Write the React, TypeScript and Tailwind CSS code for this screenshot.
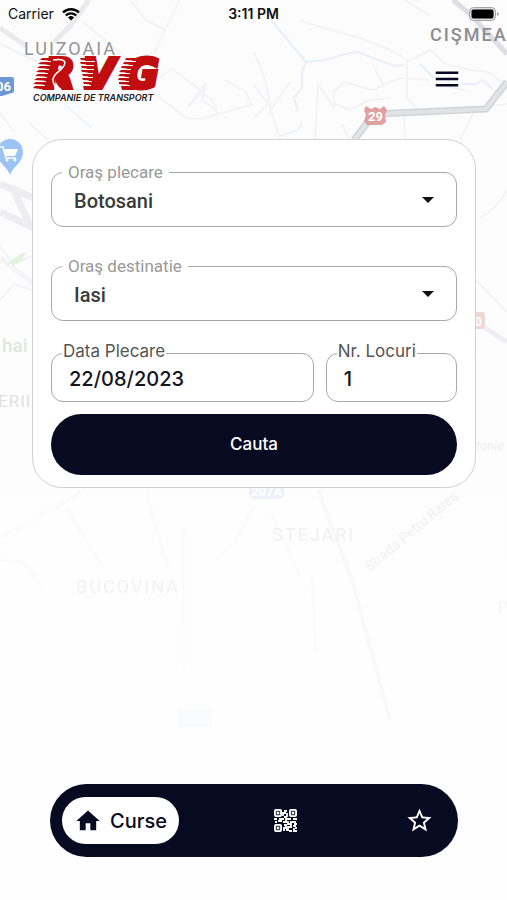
import React, { useState } from "react";
import { MdHome, MdMenu, MdStarBorder } from "react-icons/md";

const cities = ["Botosani", "Iasi", "Suceava", "Bucuresti"];

const QrIcon = () => (
  <svg viewBox="0 0 23 23" className="size-[23px]" fill="none" stroke="currentColor" aria-hidden="true">
    <g fill="#4a4d60" strokeWidth="1.800">
      <rect x="0.900" y="0.900" width="6.200" height="6.200" rx="1" />
      <rect x="15.900" y="0.900" width="6.200" height="6.200" rx="1" />
      <rect x="0.900" y="15.900" width="6.200" height="6.200" rx="1" />
    </g>
    <path d="M3 4h2M18 4h2M3 19h2" strokeWidth="2" />
    <path
      d="M9 7V4h2V2h2M13 4v4M10 8h3M0 10h3M4 12h4M5 10h5M9 13h3v-3h5M14 12v3h3v-2h3M19 10h4M21 12v3h2M17 16v2h-3v3h-2M10 16h2v3h-2v3M19 17h3M20 19v3h3M15 22h3M22 18v2M1 13h2"
      strokeWidth="1.800"
    />
  </svg>
);

const Logo = () => (
  <svg viewBox="0 0 128 48" className="h-12 w-32" role="img" aria-label="RVG Companie de transport">
    <g
      fill="#c00d0d"
      stroke="#c00d0d"
      strokeWidth="4"
      fontFamily="DejaVu Sans, sans-serif"
      fontWeight="700"
      fontStyle="italic"
      fontSize="40"
    >
      <text x="11" y="33">R</text>
      <text x="51" y="33">V</text>
      <text x="93" y="33">G</text>
    </g>
    {/* speed lines trailing each letter */}
    <g fill="#c00d0d">
      <path d="M9 3H24V6L7 5ZM8 7H22V10L5 9ZM7 11H22V14L4 13ZM6 15H20V18L3 17ZM5 19H20V22L2 21ZM4 23H18V26L1 25ZM3 27H16V30L0 29ZM2 31H15V35L0 33Z" />
      <path d="M47 3H62V6L48 5ZM47 7H64V10L48 9ZM48 11H64V14L49 13ZM48 15H65V18L49 17ZM49 19H66V22L50 21ZM49 23H66V26L50 25ZM50 27H66V30L51 29ZM50 31H66V35H51Z" />
      <path d="M93 3H108V6L92 5ZM91 7H104V10L90 9ZM89 11H102V14L88 13ZM88 15H100V18L86 17ZM87 19H100V22L85 21ZM86 23H100V26L85 25ZM86 27H100V30L86 29ZM88 31H102V35H89Z" />
    </g>
    <g stroke="#fff" strokeWidth="1">
      <path d="M5 6.500H18M4 10.500H17M3 14.500H16M2 18.500H15M2 22.500H14M1 26.500H13M0 30.500H12" />
      <path d="M47 6.500H62M47 10.500H61M48 14.500H61M48 18.500H60M49 22.500H60M49 26.500H59M50 30.500H58" />
      <path d="M90 6.500H103M88 10.500H100M86 14.500H98M85 18.500H97M84 22.500H96M84 26.500H96M84 30.500H97" />
    </g>
    {/* road running through the R */}
    <path d="M34 9C37 14 28 17 27 23C26 28 31 30 33 32" stroke="#c00d0d" strokeWidth="9" fill="none" />
    <path d="M20 5C32 3 34 7 30 12C27 17 20 18 20 25C20 30 23 31 23 36" stroke="#fff" strokeWidth="1.500" fill="none" />
    <text x="0" y="46" fontFamily="Inter, sans-serif" fontWeight="600" fontStyle="italic" fontSize="9" fill="#222">
      COMPANIE DE TRANSPORT
    </text>
  </svg>
);

const MapBackground = () => (
  <svg
    viewBox="0 0 507 900"
    preserveAspectRatio="xMidYMin slice"
    className="absolute inset-0 size-full"
    fontFamily="Roboto, sans-serif"
    aria-hidden="true"
  >
    <defs>
      <linearGradient id="fade" x2="0" y2="1">
        <stop offset="0" stopColor="#fcfcfd" />
        <stop offset="0.700" stopColor="#fefefe" />
      </linearGradient>
    </defs>
    <rect width="507" height="900" fill="url(#fade)" />
    <g fill="none" stroke="#f4f4f7" strokeWidth="2" strokeLinejoin="round">
      <path d="M180 0 160 40 154 54M130 0 146 20 165 30M83 22 135 65 150 90 186 118 200 119 254 104" />
      <path d="M188 106 206 84 202 100 216 110M160 77 172 69 202 91 189 106M198 96 Q214 92 217 116" />
      <path d="M254 52 Q266 75 271 110L280 140M254 85 268 104 254 118M300 21 360 38 393 51 404 58 409 61 430 50 446 64 470 70 488 72 507 86" />
      <path d="M268 114 290 82M315 140 318 84 334 108 334 92 344 82 372 90 400 78 430 80M334 104 350 110 370 100 390 98" />
      <path d="M407 61 407 98 420 112M375 69 383 84M350 140 342 124M404 116 405 138M450 70 448 86 470 92M460 140 476 108 507 104" />
      <path d="M405 0 430 16M225 80 246 92 251 104M0 112 14 132M48 140 30 124M476 280 507 312M480 218 Q496 210 507 190" />
      <path d="M0 246 14 264 32 256M0 300 14 284 32 290" />
    </g>
    <g fill="none" stroke="#e9effa" strokeWidth="2" strokeLinejoin="round">
      <path d="M271 20 306 62 325 60 345 54 358 52 378 60 395 66 405 65M306 62 302 72 302 88 294 98 298 112M420 64 434 78M462 84 476 84 482 80 494 90" />
      <path d="M0 44 60 72" stroke="#f0f1f9" />
      <path d="M64 104 92 128M280 136 298 130 302 122" stroke="#f0f4fa" />
    </g>
    <g fill="none" stroke="#e9e9ee">
      <path d="M89 0 70 26 54 42" strokeWidth="5" />
      <path d="M0 28 26 46" strokeWidth="5" />
      <path d="M0 184 34 198M0 212 34 228M12 186 30 226" strokeWidth="7" stroke="#eeeef1" />
      <path d="M0 258 34 284" strokeWidth="5" stroke="#f5f5f7" />
      <path d="M453 0 470 14 507 54" stroke="#dedee4" strokeWidth="5" />
    </g>
    <g fill="none" strokeLinejoin="round">
      <path d="M354 140 374 114 486 109 507 82" stroke="#d2d4d6" strokeWidth="7" />
      <path d="M354 140 374 114 486 109 507 82" stroke="#e1e3e4" strokeWidth="4" />
    </g>
    <g fill="none" stroke="#fbfbfc" strokeWidth="3">
      <path d="M0 538 60 505 100 480M66 508 102 566M146 492 168 568M254 506 236 540 216 560" />
      <path d="M272 516 300 576M184 530V670M312 580 316 652M0 560 22 562 42 586" />
      <path d="M318 490 352 580 390 720" stroke="#f9f9fa" strokeWidth="4" />
      <path d="M482 326 507 342" stroke="#efeff2" strokeWidth="5" />
    </g>
    <path d="M8 262 22 253 26 252 22 260 14 266Z" fill="#e5f3df" />
    {/* map pin with shopping cart */}
    <path d="M10 175C7 166 -3 163 -3 152A13 13 0 0 1 23 152C23 163 13 166 10 175Z" fill="#9bc3f4" />
    <path d="M4 149H18L15 156H6Z" fill="#fff" />
    <path d="M0 147H3L6 158H16" fill="none" stroke="#fff" strokeWidth="1.500" />
    <circle cx="7" cy="160" r="1.500" fill="#fff" />
    <circle cx="15" cy="160" r="1.500" fill="#fff" />
    <path d="M-4 77H12Q14 77 14 79V91Q14 93 12 93L2 96H-4Z" fill="#6c98d4" />
    <text x="-4" y="91" fontSize="13" fontWeight="700" fill="#fff">06</text>
    <path d="M366 106 371 109 375 107 380 109 384 106 387 110 385 115 386 122 382 125 367 125 364 121 366 115 364 110Z" fill="#dfa09f" />
    <text x="368" y="121" fontSize="13" fontWeight="700" fill="#fff">29</text>
    <rect x="466" y="312" width="19" height="17" rx="3" fill="#f1d6d9" />
    <text x="475" y="326" fontSize="12" fontWeight="700" fill="#fff">0</text>
    <text x="24" y="55" fontSize="18" letterSpacing="2" fill="#929499">LUIZOAIA</text>
    <text x="430" y="41" fontSize="18" fontWeight="500" letterSpacing="2" fill="#8b8d92">CIŞMEA</text>
    <text x="2" y="352" fontSize="19" fontWeight="500" fill="#dde8df">hai</text>
    <text x="-2" y="407" fontSize="17" letterSpacing="1" fill="#dfdfe2">ERII</text>
    <text x="476" y="450" fontSize="13" fontStyle="italic" fill="#eeeef0">tonie</text>
    <rect x="249" y="484" width="35" height="15" rx="5" fill="#eff0fa" />
    <text x="251" y="496" fontSize="13" fontWeight="700" fill="#fff">207A</text>
    <text x="272" y="541" fontSize="18" letterSpacing="2" fill="#f1f1f2">STEJARI</text>
    <text x="76" y="593" fontSize="18" letterSpacing="2" fill="#f3f3f4">BUCOVINA</text>
    <text x="370" y="572" fontSize="14" transform="rotate(-40 370 572)" fill="#f1f1f2">Strada Petru Rareş</text>
    <text x="498" y="613" fontSize="16" fill="#f5f5f6">P</text>
    <rect x="178" y="709" width="34" height="18" rx="2" fill="#fafbff" />
  </svg>
);

const StatusBar = () => (
  <div className="grid h-7 grid-cols-3 items-center px-2 text-sm text-[#111]">
    <div className="flex items-center gap-2">
      <span>Carrier</span>
      <svg viewBox="0 0 18 14" className="h-3.5 w-[18px]" aria-hidden="true">
        <g fill="none" stroke="#000" strokeWidth="2.400">
          <path d="M1 5.500A11.500 11.500 0 0 1 17 5.500" />
          <path d="M3.800 8.500A7.500 7.500 0 0 1 14.200 8.500" />
        </g>
        <path d="M9 13.500 6 10.500A4.300 4.300 0 0 1 12 10.500Z" />
      </svg>
    </div>
    <div className="text-center font-semibold">3:11 PM</div>
    <svg viewBox="0 0 30 14" className="h-3.5 w-[30px] justify-self-end" aria-hidden="true">
      <rect x="0.500" y="0.500" width="26" height="13" rx="4" fill="#ddd" stroke="#a5a5a5" />
      <rect x="2.500" y="2.500" width="22" height="9" rx="2" />
      <path d="M28 5v4q2-1 2-2t-2-2z" fill="#a5a5a5" />
    </svg>
  </div>
);

interface FieldProps {
  id: string;
  label: string;
  value: string;
  onChange: (value: string) => void;
}

const CitySelect = ({ id, label, value, onChange }: FieldProps) => (
  <fieldset className="relative min-w-0 rounded-xl border border-[#a8a8a8] font-[Roboto,sans-serif]">
    <legend className="ml-2.5 px-1.5 text-[17px] leading-5 text-[#999]">
      <label htmlFor={id}>{label}</label>
    </legend>
    <select
      id={id}
      value={value}
      onChange={(e) => onChange(e.target.value)}
      className="mb-1.5 h-[38px] w-full appearance-none bg-transparent px-[22px] text-xl font-medium text-[#3b3b3b] outline-none"
    >
      {cities.map((city) => (
        <option key={city}>{city}</option>
      ))}
    </select>
    <svg viewBox="0 0 12 6" className="pointer-events-none absolute right-[22px] top-[15px] h-1.5 w-3" aria-hidden="true">
      <path d="M0 0H12L6 6Z" fill="#111" />
    </svg>
  </fieldset>
);

const TextField = ({ id, label, value, onChange }: FieldProps) => (
  <fieldset className="min-w-0 rounded-xl border border-[#a8a8a8]">
    <legend className="ml-2.5 px-px pb-1 text-[17px] leading-5 text-[#555]">
      <label htmlFor={id}>{label}</label>
    </legend>
    <input
      id={id}
      type="text"
      value={value}
      onChange={(e) => onChange(e.target.value)}
      className="mb-2 block h-7 w-full bg-transparent px-[17px] text-xl font-medium text-[#15151f] outline-none"
    />
  </fieldset>
);

const App = () => {
  const [from, setFrom] = useState("Botosani");
  const [to, setTo] = useState("Iasi");
  const [date, setDate] = useState("22/08/2023");
  const [seats, setSeats] = useState("1");

  return (
    <div className="relative flex min-h-screen flex-col overflow-hidden bg-white font-[Inter,sans-serif]">
      <MapBackground />
      <div className="relative flex grow flex-col">
        <StatusBar />
        <header className="flex items-center justify-between pb-9 pl-[33px] pr-[45px] pt-[27px]">
          <Logo />
          <button type="button" aria-label="Meniu" className="text-[#070a20]">
            <MdMenu className="size-[30px]" />
          </button>
        </header>
        <main className="pl-8 pr-[31px]">
          <form
            className="rounded-[30px] border border-[#cfd1d3] bg-white px-[18px] pb-3 pt-[22px]"
            onSubmit={(e) => e.preventDefault()}
          >
            <div className="flex flex-col gap-[29px]">
              <CitySelect id="from" label="Oraş plecare" value={from} onChange={setFrom} />
              <CitySelect id="to" label="Oraş destinatie" value={to} onChange={setTo} />
            </div>
            <div className="mt-5 grid grid-cols-[2fr_1fr] gap-3">
              <TextField id="date" label="Data Plecare" value={date} onChange={setDate} />
              <TextField id="seats" label="Nr. Locuri" value={seats} onChange={setSeats} />
            </div>
            <button type="submit" className="mt-3 h-[61px] w-full rounded-full bg-[#070a20] text-[17px] font-medium text-white">
              Cauta
            </button>
          </form>
        </main>
        <nav className="mb-[43px] ml-[50px] mr-[49px] mt-auto flex h-[73px] items-center justify-between rounded-full bg-[#070a20] pl-3 pr-6 text-white">
          <a href="#curse" className="flex h-[47px] items-center gap-2 rounded-full bg-white px-3 text-xl font-medium text-[#070a20]">
            <MdHome className="size-7" />
            Curse
          </a>
          <a href="#bilete" aria-label="Bilete" className="mr-3">
            <QrIcon />
          </a>
          <a href="#favorite" aria-label="Favorite">
            <MdStarBorder className="size-[29px]" />
          </a>
        </nav>
      </div>
    </div>
  );
};

export default App;
